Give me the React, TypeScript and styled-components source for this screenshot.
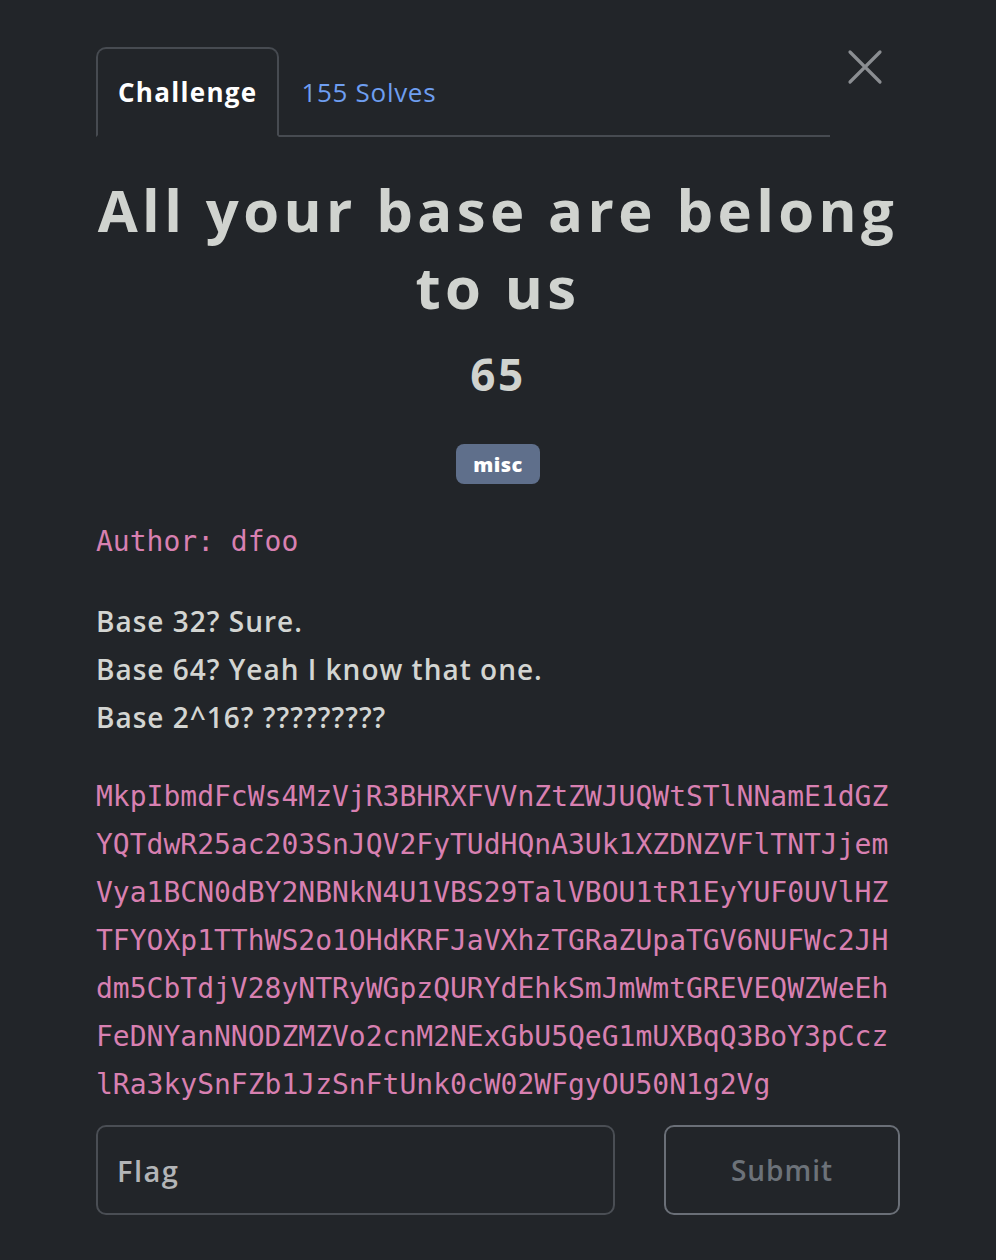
import React, { FC, useState } from 'react';
import styled, { createGlobalStyle, css } from 'styled-components';

const GlobalStyle = createGlobalStyle`
  html, body {
    margin: 0;
    padding: 0;
    background-color: #222529;
  }

  * {
    box-sizing: border-box;
  }
`;

const SANS = `'Open Sans', 'Noto Sans', sans-serif`;
const MONO = `'DejaVu Sans Mono', 'Liberation Mono', monospace`;

const Modal = styled.div`
  width: 996px;
  min-height: 1260px;
  padding: 47px 96px 40px 96px;
  background-color: #222529;
  font-family: ${SANS};
`;

const HeaderRow = styled.header`
  display: flex;
  align-items: flex-start;
`;

const Nav = styled.nav`
  flex: 1;
  display: flex;
  align-items: flex-end;
  border-bottom: 2px solid #474b51;
`;

type ITab = {
  active?: boolean;
};

const Tab = styled.button<ITab>`
  height: 90px;
  padding: 0 20px;
  margin-bottom: -2px;
  display: flex;
  align-items: center;
  font-family: ${SANS};
  font-size: 26px;
  background: transparent;
  border: 2px solid transparent;
  border-radius: 10px 10px 0 0;
  cursor: pointer;

  ${(props) =>
    props.active
      ? css`
          color: #ffffff;
          font-weight: 700;
          letter-spacing: 1.3px;
          border-color: #474b51;
          border-bottom-color: #222529;
        `
      : css`
          color: #6e9ef0;
          font-weight: 400;
          letter-spacing: 0.7px;
        `}
`;

const CloseButton = styled.button`
  width: 70px;
  height: 40px;
  padding: 0;
  display: flex;
  justify-content: center;
  align-items: center;
  background: transparent;
  border: none;
  cursor: pointer;
`;

const Title = styled.h1`
  margin: 34px 0 0 0;
  text-align: center;
  font-size: 58px;
  line-height: 77px;
  font-weight: 700;
  letter-spacing: 4.4px;
  color: #d0d3cf;
`;

const Points = styled.h3`
  margin: 23px 0 0 0;
  text-align: center;
  font-size: 44px;
  line-height: 53px;
  font-weight: 700;
  letter-spacing: 2.5px;
  color: #d0d3cf;
`;

const TagRow = styled.div`
  margin-top: 43px;
  display: flex;
  justify-content: center;
`;

const Tag = styled.span`
  height: 40px;
  width: 84px;
  display: flex;
  justify-content: center;
  align-items: center;
  border-radius: 8px;
  background-color: #5f6f8b;
  color: #ffffff;
  font-size: 20px;
  font-weight: 800;
  letter-spacing: 0.5px;
`;

const Author = styled.p`
  margin: 34px 0 0 0;
  font-family: ${MONO};
  font-size: 28px;
  line-height: 48px;
  color: #d880b1;
`;

const Description = styled.div`
  margin-top: 31px;
  font-size: 28px;
  line-height: 48px;
  font-weight: 600;
  letter-spacing: 1px;
  color: #d3d5d2;
`;

const Line = styled.p`
  margin: 0;
`;

const Code = styled.code`
  display: block;
  margin-top: 32px;
  font-family: ${MONO};
  font-size: 28px;
  line-height: 48px;
  color: #d880b1;
  word-break: break-all;
`;

const Form = styled.form`
  margin-top: 16px;
  display: flex;
  gap: 49px;
`;

const Input = styled.input`
  width: 519px;
  height: 90px;
  padding: 0 19px;
  border: 2px solid #4a4e54;
  border-radius: 10px;
  background-color: transparent;
  font-family: ${SANS};
  font-size: 29px;
  font-weight: 600;
  letter-spacing: 1.5px;
  color: #d3d5d2;
  outline: none;

  &::placeholder {
    color: #b3b5b7;
  }
`;

const SubmitButton = styled.button`
  flex: 1;
  height: 90px;
  border: 2px solid #6a6f77;
  border-radius: 10px;
  background-color: transparent;
  font-family: ${SANS};
  font-size: 28px;
  font-weight: 600;
  letter-spacing: 1px;
  color: #6c7279;
  cursor: pointer;
`;

const CODE_LINES = [
  'MkpIbmdFcWs4MzVjR3BHRXFVVnZtZWJUQWtSTlNNamE1dGZ',
  'YQTdwR25ac203SnJQV2FyTUdHQnA3Uk1XZDNZVFlTNTJjem',
  'Vya1BCN0dBY2NBNkN4U1VBS29TalVBOU1tR1EyYUF0UVlHZ',
  'TFYOXp1TThWS2o1OHdKRFJaVXhzTGRaZUpaTGV6NUFWc2JH',
  'dm5CbTdjV28yNTRyWGpzQURYdEhkSmJmWmtGREVEQWZWeEh',
  'FeDNYanNNODZMZVo2cnM2NExGbU5QeG1mUXBqQ3BoY3pCcz',
  'lRa3kySnFZb1JzSnFtUnk0cW02WFgyOU50N1g2Vg',
];

export const App: FC = () => {
  const [flag, setFlag] = useState('');

  const onSubmit = (e: React.FormEvent<HTMLFormElement>) => {
    e.preventDefault();
  };

  return (
    <>
      <GlobalStyle />
      <Modal>
        <HeaderRow>
          <Nav>
            <Tab active>Challenge</Tab>
            <Tab>155 Solves</Tab>
          </Nav>
          <CloseButton aria-label="Close">
            <svg width="36" height="36" viewBox="0 0 36 36">
              <path d="M3 3 L33 33 M33 3 L3 33" stroke="#8b8e92" strokeWidth="3.2" strokeLinecap="round" />
            </svg>
          </CloseButton>
        </HeaderRow>

        <Title>All your base are belong to us</Title>
        <Points>65</Points>
        <TagRow>
          <Tag>misc</Tag>
        </TagRow>

        <Author>Author: dfoo</Author>

        <Description>
          <Line>Base 32? Sure.</Line>
          <Line>Base 64? Yeah I know that one.</Line>
          <Line>Base 2^16? ?????????</Line>
        </Description>

        <Code>{CODE_LINES.join('')}</Code>

        <Form onSubmit={onSubmit}>
          <Input type="text" placeholder="Flag" value={flag} onChange={(e) => setFlag(e.target.value)} />
          <SubmitButton type="submit">Submit</SubmitButton>
        </Form>
      </Modal>
    </>
  );
};

export default App;
